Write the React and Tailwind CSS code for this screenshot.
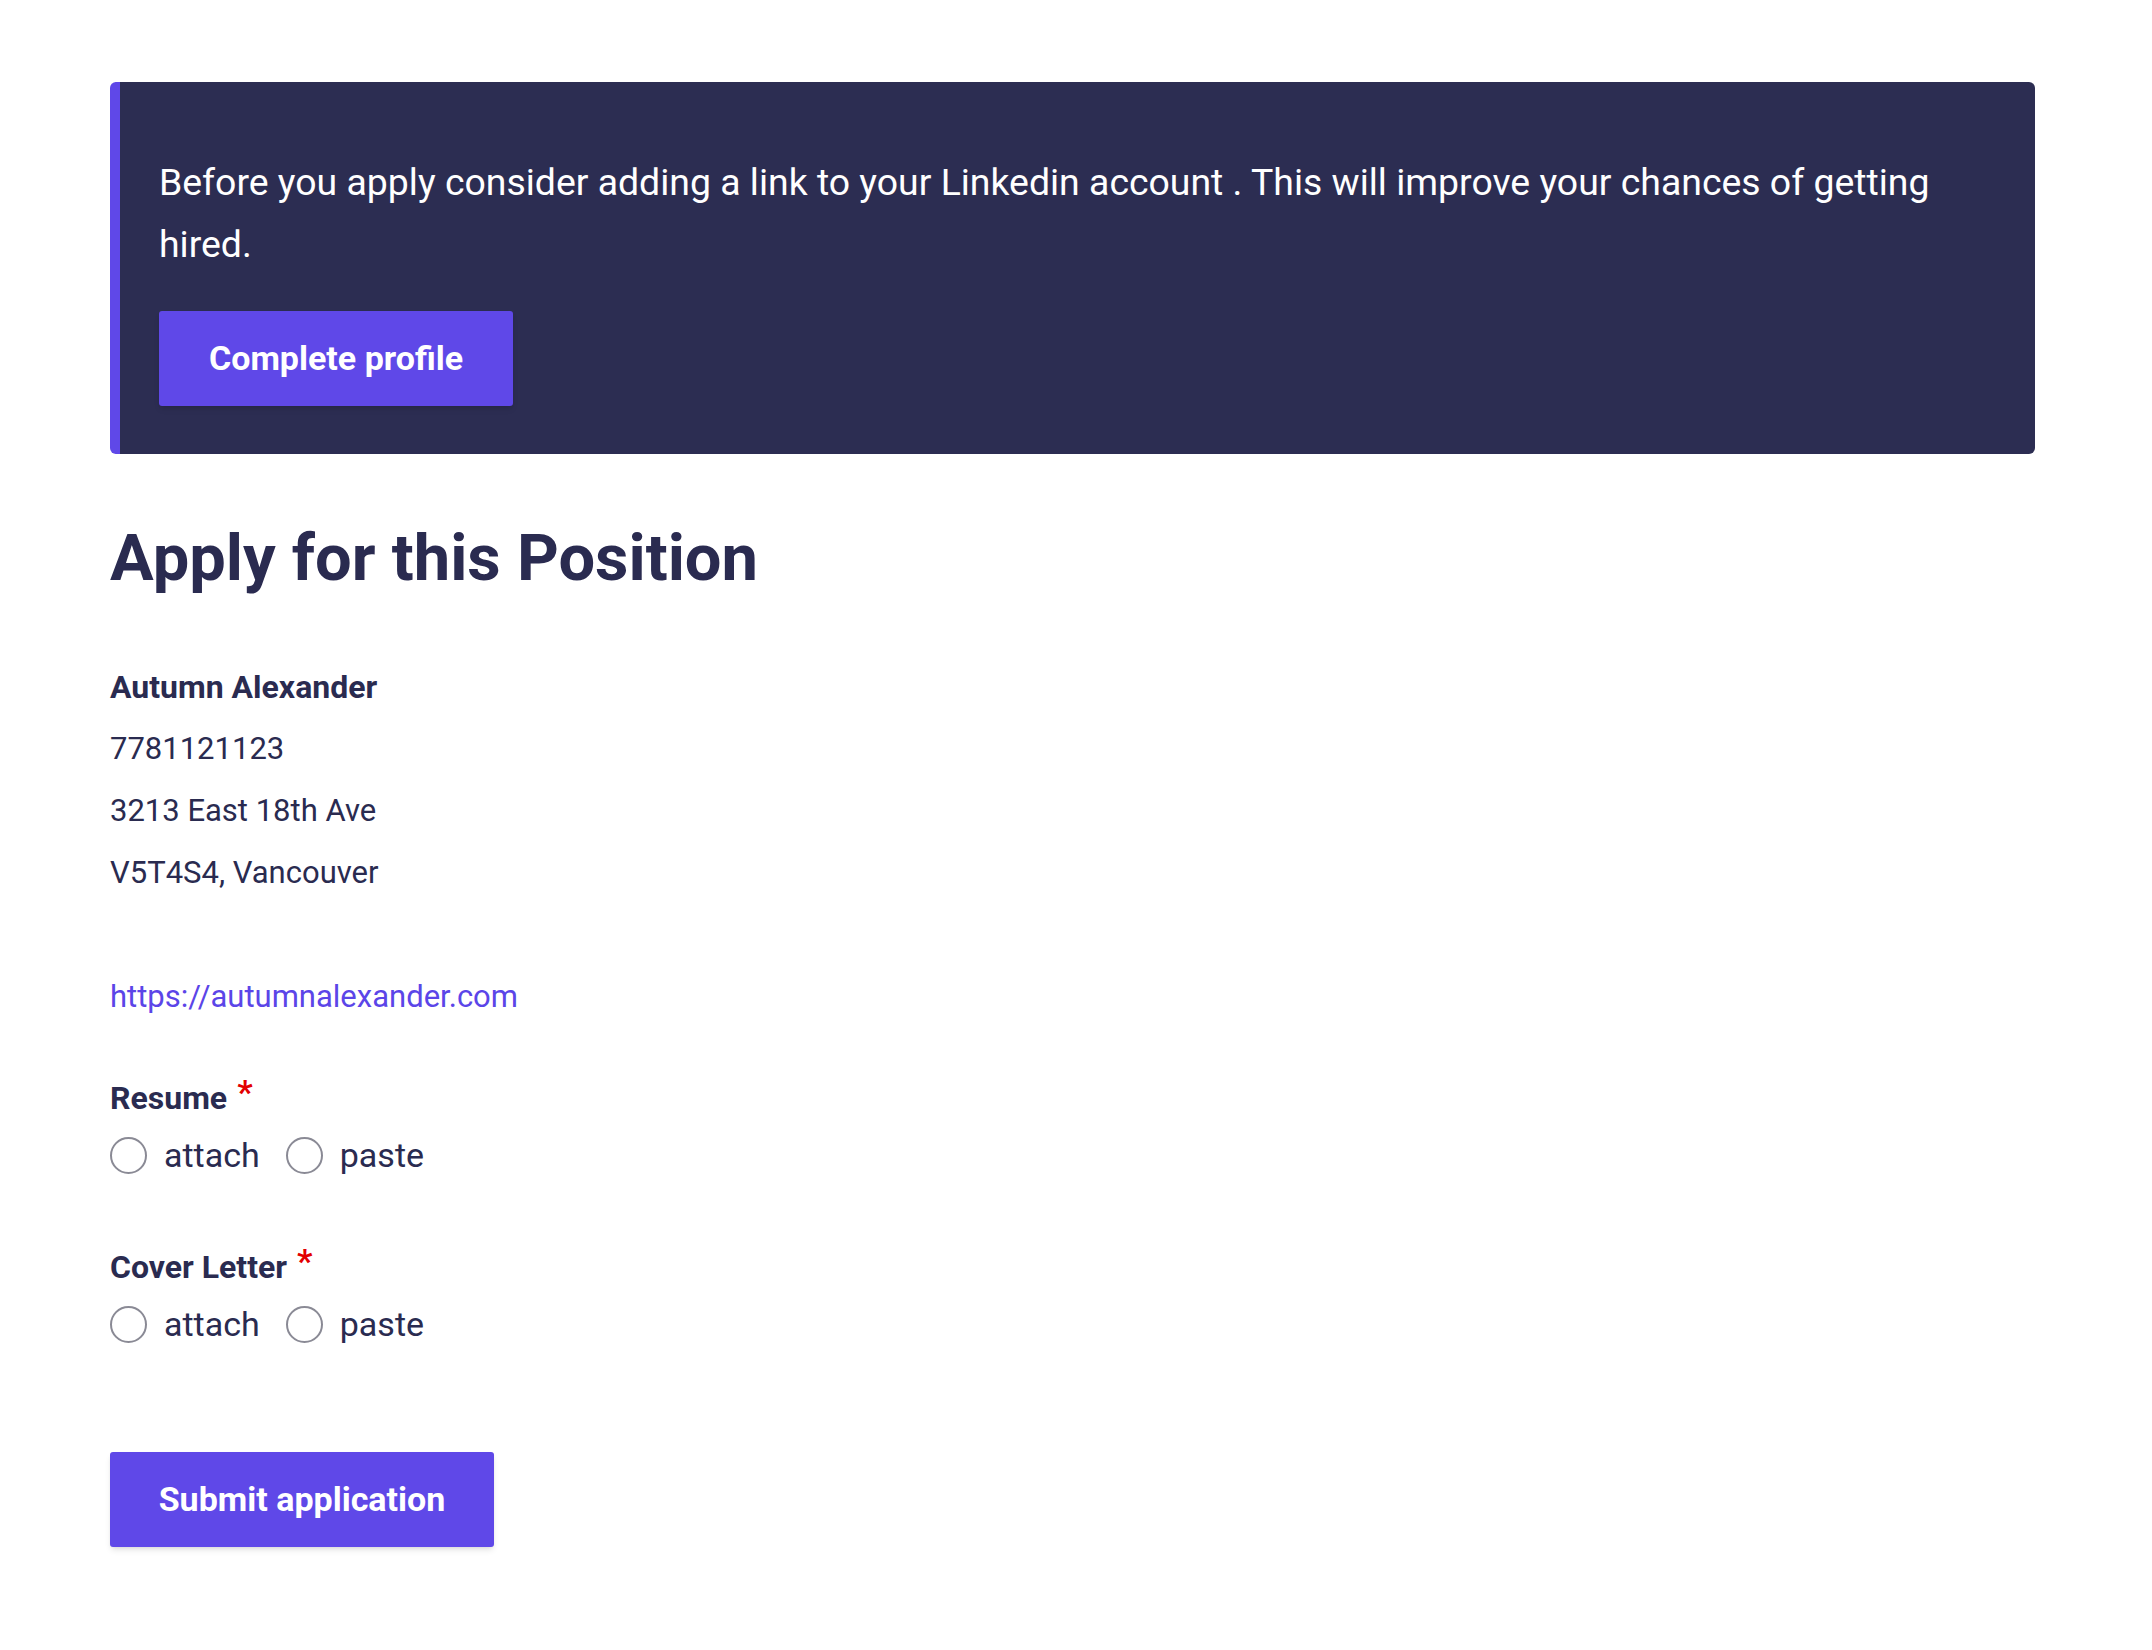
import { useState } from "react";

function RadioGroup({ name }) {
  const [value, setValue] = useState("");
  return (
    <div className="flex items-center h-[62px] mt-[6px]">
      {["attach", "paste"].map((opt) => (
        <label key={opt} className="flex items-center mr-[26px] cursor-pointer">
          <input
            type="radio"
            name={name}
            value={opt}
            checked={value === opt}
            onChange={() => setValue(opt)}
            className="appearance-none w-[37px] h-[37px] rounded-full border-[2px] border-[#8a8a95] bg-white checked:border-[11px] checked:border-[#5f48e8] m-0"
          />
          <span className="ml-[17px] text-[34px] text-[#2a2b50]">{opt}</span>
        </label>
      ))}
    </div>
  );
}

function FieldLabel({ children }) {
  return (
    <div className="flex items-start h-[44px] text-[32px] font-bold text-[#2a2b50]">
      {children}
      <span className="ml-[10px] text-[#e30000] text-[34px] leading-none mt-[1px]">*</span>
    </div>
  );
}

export default function App() {
  return (
    <div className="min-h-screen bg-white pl-[110px] pr-[117px] pt-[82px] pb-[100px] font-['Roboto',sans-serif] text-[#2a2b50]">
      <div className="bg-[#2c2d52] rounded-[6px] border-l-[10px] border-[#5f48e8] pl-[39px] pr-[40px] pt-[69px] pb-[48px]">
        <p className="text-white text-[37.4px] leading-[62px]">
          Before you apply consider adding a link to your Linkedin account . This will improve your chances of getting hired.
        </p>
        <button className="mt-[36px] bg-[#5f48e8] text-white font-bold text-[34px] w-[354px] h-[95px] rounded-[3px] shadow-md">
          Complete profile
        </button>
      </div>

      <h1 className="mt-[64px] text-[65px] leading-[80px] font-bold text-[#2a2b50]">Apply for this Position</h1>

      <div className="mt-[58px] text-[31px] leading-[62px]">
        <div className="font-bold text-[32px]">Autumn Alexander</div>
        <div>7781121123</div>
        <div>3213 East 18th Ave</div>
        <div>V5T4S4, Vancouver</div>
        <div className="h-[62px]"></div>
        <a href="#" className="text-[#5b45e8]">https://autumnalexander.com</a>
      </div>

      <div className="mt-[46px]">
        <FieldLabel>Resume</FieldLabel>
        <RadioGroup name="resume" />
      </div>

      <div className="mt-[57px]">
        <FieldLabel>Cover Letter</FieldLabel>
        <RadioGroup name="cover" />
      </div>

      <button className="mt-[97px] bg-[#5f48e8] text-white font-bold text-[34px] w-[384px] h-[95px] rounded-[3px] shadow-md">
        Submit application
      </button>
    </div>
  );
}
